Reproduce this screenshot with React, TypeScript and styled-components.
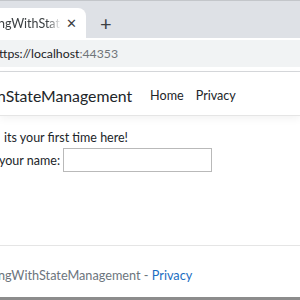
import React from "react";
import styled, { createGlobalStyle } from "styled-components";

const GlobalStyle = createGlobalStyle`
  html, body { margin: 0; padding: 0; }
  body {
    width: 300px;
    height: 300px;
    overflow: hidden;
    background: #ffffff;
    font-family: Lato, "Noto Sans", sans-serif;
  }
`;

const Window = styled.div`
  width: 300px;
  height: 300px;
  display: flex;
  flex-direction: column;
  overflow: hidden;
  box-sizing: border-box;
  border-bottom: 3px solid #8c8c8c;
`;

const TabStrip = styled.div`
  height: 38px;
  flex: none;
  box-sizing: border-box;
  background: #dee1e6;
  border-top: 1px solid #c3c6ca;
  display: flex;
  align-items: flex-end;
`;

const Tab = styled.div`
  width: 86px;
  height: 30px;
  background: #ffffff;
  border-top-right-radius: 8px;
  display: flex;
  align-items: center;
  font-size: 12.5px;
  color: #3c4043;
  overflow: hidden;
`;

const TabTitle = styled.span`
  flex: 1;
  min-width: 0;
  margin-left: -2px;
  white-space: nowrap;
  overflow: hidden;
  -webkit-mask-image: linear-gradient(to right, #000 78%, transparent);
  mask-image: linear-gradient(to right, #000 78%, transparent);
`;

const TabClose = styled.span`
  width: 16px;
  margin: 0 7px 0 2px;
  text-align: center;
  font-size: 13px;
  color: #3c4043;
`;

const NewTab = styled.span`
  margin-left: 14px;
  height: 30px;
  display: flex;
  align-items: center;
  font-size: 20px;
  color: #3c4043;
`;

const Toolbar = styled.div`
  height: 34px;
  flex: none;
  box-sizing: border-box;
  background: #ffffff;
  padding: 2px 0 3px;
  border-bottom: 1px solid #d6d8db;
`;

const Omnibox = styled.div`
  height: 27px;
  background: #f1f3f4;
  display: flex;
  align-items: center;
  font-size: 12.3px;
  color: #202124;
  white-space: nowrap;
`;

const UrlHost = styled.span`
  margin-left: -1px;
`;

const UrlPort = styled.span`
  color: #70757a;
`;

const Navbar = styled.nav`
  height: 44px;
  flex: none;
  box-sizing: border-box;
  padding-top: 3px;
  border-bottom: 1px solid #e5e5e5;
  box-shadow: 0 3px 8px rgba(0, 0, 0, 0.05);
  display: flex;
  align-items: center;
  white-space: nowrap;
`;

const Brand = styled.span`
  font-size: 15.8px;
  color: #212529;
  margin-left: -3px;
  margin-right: 18px;
`;

const NavLink = styled.a`
  font-size: 12.6px;
  color: #212529;
  margin-right: 12px;
  text-decoration: none;
`;

const Main = styled.main`
  flex: 1;
  padding-top: 11px;
  font-size: 12.5px;
  color: #212529;
  line-height: 21px;
`;

const Line = styled.div<{ $indent?: number }>`
  display: flex;
  align-items: center;
  white-space: nowrap;
  margin-left: ${(p) => p.$indent ?? 0}px;
`;

const NameInput = styled.input`
  width: 149px;
  height: 24px;
  box-sizing: border-box;
  margin-left: 3px;
  border: 1px solid #b9b9b9;
  padding: 0 4px;
  font: inherit;
`;

const Footer = styled.footer`
  height: 52px;
  flex: none;
  box-sizing: border-box;
  border-top: 1px solid #e5e5e5;
  padding-top: 7px;
  display: flex;
  align-items: center;
  font-size: 12.7px;
  color: #6c757d;
  white-space: nowrap;
`;

const FooterText = styled.span`
  margin-left: -2px;
`;

const FooterLink = styled.a`
  color: #1b6ec2;
  text-decoration: none;
`;

export default function App() {
  return (
    <>
      <GlobalStyle />
      <Window>
        <TabStrip>
          <Tab>
            <TabTitle>ngWithStateManagement</TabTitle>
            <TabClose>✕</TabClose>
          </Tab>
          <NewTab>+</NewTab>
        </TabStrip>
        <Toolbar>
          <Omnibox>
            <UrlHost>ttps://localhost</UrlHost>
            <UrlPort>:44353</UrlPort>
          </Omnibox>
        </Toolbar>
        <Navbar>
          <Brand>nStateManagement</Brand>
          <NavLink href="#">Home</NavLink>
          <NavLink href="#">Privacy</NavLink>
        </Navbar>
        <Main>
          <Line $indent={4}>its your first time here!</Line>
          <Line $indent={-1}>
            your name:
            <NameInput type="text" />
          </Line>
        </Main>
        <Footer>
          <FooterText>
            ngWithStateManagement - <FooterLink href="#">Privacy</FooterLink>
          </FooterText>
        </Footer>
      </Window>
    </>
  );
}
